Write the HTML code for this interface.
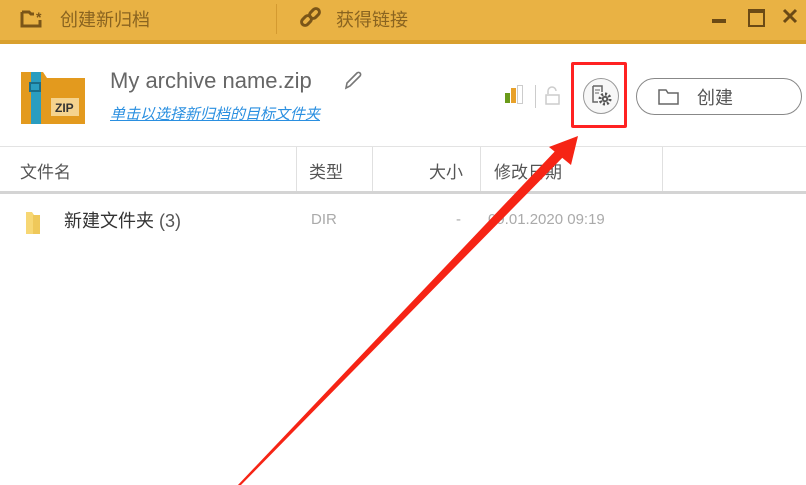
<!DOCTYPE html>
<html><head><meta charset="utf-8"><style>
body{margin:0;width:806px;height:485px;overflow:hidden;background:#fff;font-family:"Liberation Sans","Noto Sans CJK SC",sans-serif;position:relative}
.abs{position:absolute}
.top{left:0;top:0;width:806px;height:40px;background:#E9B244;border-bottom:4px solid #D9A02E}
.tt{color:#8a6420;font-size:18px;top:6px}
.hd{top:146px;height:44px;left:0;width:806px;border-top:1px solid #e3e3e3;border-bottom:3px solid #d4d4d4}
.hd span{position:absolute;top:11px;font-size:17px;color:#555}
.vl{position:absolute;top:0;width:1px;height:44px;background:#e0e0e0}
</style></head><body>
<div class="abs top"></div>
<svg class="abs" style="left:20px;top:7px" width="28" height="22"><path d="M2 5v14h18v-6M2 5h7l2 2h3" fill="none" stroke="#7a5518" stroke-width="3"/><text x="16" y="15" font-size="14" fill="#7a5518" font-weight="bold">*</text></svg>
<div class="abs tt" style="left:60px">创建新归档</div>
<div class="abs" style="left:276px;top:4px;width:1px;height:30px;background:#d49a30"></div>
<svg class="abs" style="left:298px;top:6px" width="26" height="24"><g fill="none" stroke="#7a5518" stroke-width="3"><rect x="3" y="11" width="11" height="7" rx="3.5" transform="rotate(-45 8.5 14.5)"/><rect x="11" y="4" width="11" height="7" rx="3.5" transform="rotate(-45 16.5 7.5)"/></g></svg>
<div class="abs tt" style="left:336px">获得链接</div>
<div class="abs" style="left:712px;top:19px;width:14px;height:4px;background:#6b4a15"></div>
<div class="abs" style="left:748px;top:9px;width:13px;height:12px;border:2.5px solid #6b4a15;border-top-width:4px"></div>
<svg class="abs" style="left:782px;top:8px" width="16" height="16"><path d="M2 2L14 14M14 2L2 14" stroke="#6b4a15" stroke-width="3"/></svg>

<svg class="abs" style="left:21px;top:70px" width="64" height="54"><path d="M0 2h22l4 6h38v46H0z" fill="#E39A1E"/><rect x="10" y="2" width="10" height="52" fill="#2A9DC0"/><rect x="9" y="13" width="10" height="8" fill="none" stroke="#1a6e8a" stroke-width="2"/><rect x="30" y="28" width="28" height="18" fill="#F5D38E"/><text x="34" y="42" font-size="12" font-weight="bold" fill="#333" font-family="Liberation Sans">ZIP</text></svg>
<div class="abs" style="left:110px;top:68px;font-size:22px;color:#666">My archive name.zip</div>
<svg class="abs" style="left:342px;top:70px" width="22" height="22"><path d="M4 18l1-5 10-10a2 2 0 0 1 3 3L8 16z" fill="none" stroke="#777" stroke-width="1.6"/></svg>
<div class="abs" style="left:110px;top:103px;font-size:15px;color:#2a8fe0;text-decoration:underline;font-style:italic">单击以选择新归档的目标文件夹</div>

<div class="abs" style="left:505px;top:93px;width:5px;height:10px;background:#6a9a1a"></div>
<div class="abs" style="left:511px;top:88px;width:5px;height:15px;background:#e8a12a"></div>
<div class="abs" style="left:517px;top:85px;width:4px;height:17px;border:1px solid #ccc"></div>
<div class="abs" style="left:535px;top:85px;width:1px;height:23px;background:#ccc"></div>
<svg class="abs" style="left:544px;top:86px" width="18" height="20"><path d="M4 8V5a4 4 0 0 1 8 0" fill="none" stroke="#ccc" stroke-width="1.5"/><rect x="2" y="9" width="13" height="9" fill="none" stroke="#ccc" stroke-width="1.5"/></svg>
<div class="abs" style="left:583px;top:78px;width:36px;height:36px;border:1.5px solid #999;border-radius:50%;box-sizing:border-box;background:#f7f7f7"></div>
<svg class="abs" style="left:590px;top:84px" width="24" height="24"><path d="M3 2h9v6M3 2v16h5" fill="none" stroke="#666" stroke-width="1.5"/><path d="M5 6h5M5 9h4" stroke="#666"/><circle cx="15" cy="15" r="5" fill="none" stroke="#555" stroke-width="3" stroke-dasharray="2 1.9"/><circle cx="15" cy="15" r="3.2" fill="#555"/><circle cx="15" cy="15" r="1.3" fill="#f7f7f7"/></svg>
<div class="abs" style="left:571px;top:62px;width:56px;height:66px;border:3px solid #f22;border-radius:2px;box-sizing:border-box"></div>
<div class="abs" style="left:636px;top:78px;width:166px;height:37px;border:1.5px solid #888;border-radius:19px;box-sizing:border-box"></div>
<svg class="abs" style="left:657px;top:88px" width="24" height="18"><path d="M2 2h7l2 3h10v11H2z" fill="none" stroke="#666" stroke-width="1.5"/></svg>
<div class="abs" style="left:697px;top:84px;font-size:18px;color:#555">创建</div>

<div class="abs hd">
<span style="left:20px">文件名</span><div class="vl" style="left:296px"></div>
<span style="left:309px">类型</span><div class="vl" style="left:372px"></div>
<span style="left:429px">大小</span><div class="vl" style="left:480px"></div>
<span style="left:494px">修改日期</span><div class="vl" style="left:662px"></div>
</div>
<svg class="abs" style="left:24px;top:208px" width="20" height="26"><path d="M2 4h6l2 3h6v19H2z" fill="#F7D774"/><path d="M9 7h7v19H9z" fill="#EFC85A"/></svg>
<div class="abs" style="left:64px;top:207px;font-size:18px;color:#333">新建文件夹 <span style="color:#555">(3)</span></div>
<div class="abs" style="left:311px;top:211px;font-size:15px;color:#aaa">DIR</div>
<div class="abs" style="left:456px;top:211px;font-size:15px;color:#aaa">-</div>
<div class="abs" style="left:488px;top:211px;font-size:15px;color:#aaa">09.01.2020 09:19</div>

<svg class="abs" style="left:0;top:0" width="806" height="485"><polygon points="237,486 240,486 567,153 559,147" fill="#f62415"/><polygon points="578,136 549,147 571,165" fill="#f62415"/></svg>
</body></html>
